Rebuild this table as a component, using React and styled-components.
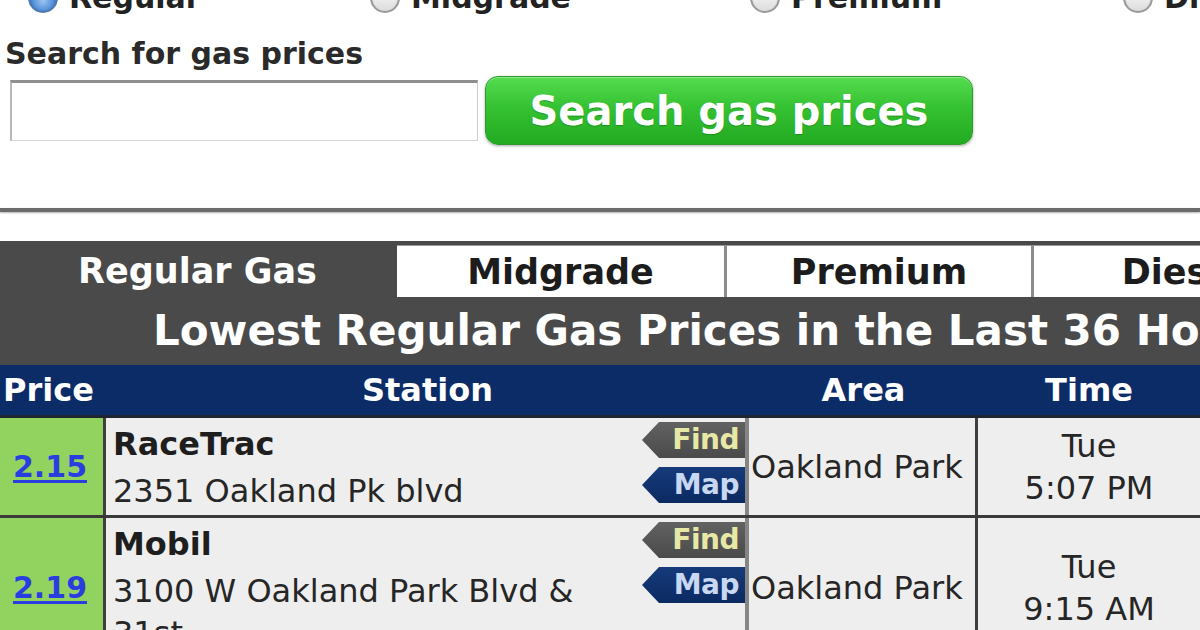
import React from "react";
import styled, { createGlobalStyle, css } from "styled-components";

const Global = createGlobalStyle`
  html, body { margin: 0; padding: 0; background: #fff; overflow: hidden; }
  body { font-family: "DejaVu Sans", "Liberation Sans", sans-serif; color: #222; }
  * { box-sizing: border-box; }
`;

const Page = styled.div`
  width: 1200px;
  height: 630px;
  overflow: hidden;
  background: #fff;
`;

const RadioRow = styled.div`
  display: grid;
  grid-template-columns: 342px 380px 373px 1fr;
  align-items: center;
  height: 40px;
  margin-top: -22px;
  padding-left: 28px;
`;

const RadioOption = styled.label`
  display: flex;
  align-items: center;
  gap: 11px;
  font-size: 30px;
  font-weight: bold;
  line-height: 30px;
  color: #222;
  white-space: nowrap;
`;

const RadioDot = styled.span`
  width: 30px;
  height: 30px;
  border-radius: 50%;
  flex: none;
  border: 2px solid #9a9a9a;
  background: linear-gradient(#ffffff, #dcdcdc);
  box-shadow: inset 0 1px 2px rgba(0, 0, 0, 0.25);
  ${(p) =>
    p.$checked &&
    css`
      border-color: #4f79ad;
      background: radial-gradient(circle at 50% 60%, #9cc6f2 0%, #4d8ad6 55%, #2d62aa 100%);
    `}
`;

const SearchLabel = styled.div`
  margin-top: 18px;
  padding-left: 5px;
  font-size: 30px;
  font-weight: bold;
  line-height: 36px;
  color: #2a2a2a;
`;

const SearchRow = styled.div`
  display: flex;
  align-items: center;
  gap: 7px;
  padding-left: 10px;
  margin-top: 4px;
`;

const SearchInput = styled.input`
  width: 468px;
  height: 61px;
  border-top: 3px solid #8f8f8f;
  border-left: 2px solid #b8b8b8;
  border-right: 1px solid #cfcfcf;
  border-bottom: 1px solid #d6d6d6;
  background: #fff;
  outline: none;
`;

const SearchButton = styled.button`
  width: 488px;
  height: 69px;
  border-radius: 13px;
  border: 1px solid #2c9a2c;
  background: linear-gradient(#55dc4f 0%, #35c232 45%, #23aa22 100%);
  box-shadow: 0 1px 3px rgba(0, 0, 0, 0.35), inset 0 1px 0 rgba(255, 255, 255, 0.35);
  color: #fff;
  font-family: "DejaVu Sans", "Liberation Sans", sans-serif;
  font-size: 40px;
  font-weight: bold;
  text-shadow: 0 1px 1px rgba(0, 80, 0, 0.35);
  padding: 0;
`;

const Rule = styled.div`
  margin-top: 63px;
  height: 4px;
  background: #6b6b6b;
  box-shadow: 0 1px 2px rgba(0, 0, 0, 0.3);
`;

const PriceBoard = styled.section`
  margin-top: 29px;
  width: 1200px;
`;

const TabBar = styled.div`
  display: flex;
  align-items: flex-end;
  height: 56px;
  background: #4a4a4a;
  white-space: nowrap;
  overflow: hidden;
`;

const Tab = styled.div`
  flex: none;
  width: ${(p) => p.$w}px;
  height: 52px;
  line-height: 52px;
  text-align: center;
  font-size: 35px;
  font-weight: bold;
  color: #1c1c1c;
  background: #fff;
  border-left: 3px solid #8c8c8c;
  border-top: 1px solid #9a9a9a;
  ${(p) =>
    p.$active &&
    css`
      background: transparent;
      color: #fff;
      border: none;
    `}
  ${(p) =>
    p.$first &&
    css`
      margin-left: 2px;
      border-left: none;
    `}
`;

const TitleBar = styled.div`
  height: 68px;
  line-height: 68px;
  padding-left: 153px;
  background: #4a4a4a;
  color: #fff;
  font-size: 42px;
  font-weight: bold;
  white-space: nowrap;
  overflow: hidden;
`;

const columns = "106px 643px 229px 1fr";

const HeaderRow = styled.div`
  display: grid;
  grid-template-columns: ${columns};
  height: 53px;
  background: #0c2c68;
  border-bottom: 3px solid #1e2430;
`;

const HeaderCell = styled.div`
  line-height: 50px;
  font-size: 32px;
  font-weight: bold;
  color: #fff;
  text-align: ${(p) => p.$align || "center"};
  padding-left: ${(p) => (p.$align === "left" ? "3px" : "0")};
`;

const Row = styled.div`
  display: grid;
  grid-template-columns: ${columns};
  border-bottom: 3px solid #3a3a3a;
`;

const PriceCell = styled.div`
  display: flex;
  align-items: center;
  justify-content: center;
  padding-right: 3px;
  background: #92d35f;
  border-right: 3px solid #3f3f3f;
`;

const PriceLink = styled.a`
  font-size: 30px;
  font-weight: bold;
  color: #2a3ee0;
  text-decoration: underline;
  text-underline-offset: 3px;
`;

const StationCell = styled.div`
  display: flex;
  background: #eeeeee;
  border-right: 4px solid #858585;
  padding-left: 7px;
`;

const StationText = styled.div`
  flex: 1;
  padding-top: 5px;
  padding-bottom: 3px;
  font-size: 32px;
  line-height: 42px;
  color: #262626;
`;

const StationName = styled.div`
  font-weight: bold;
  color: #1e1e1e;
  margin-bottom: 5px;
`;

const Tags = styled.div`
  flex: none;
  display: flex;
  flex-direction: column;
  gap: 9px;
  padding-top: 4px;
  width: 103px;
`;

const Tag = styled.div`
  height: 36px;
  line-height: 36px;
  padding-right: 6px;
  text-align: right;
  font-size: 28px;
  font-weight: bold;
  letter-spacing: -0.5px;
  clip-path: polygon(17px 0, 100% 0, 100% 100%, 17px 100%, 0 50%);
  ${(p) =>
    p.$kind === "find"
      ? css`
          background: linear-gradient(#626262, #4a4a4a);
          color: #e7e8a6;
        `
      : css`
          background: linear-gradient(#163a7a, #0b2a62);
          color: #c9d8f2;
        `}
`;

const AreaCell = styled.div`
  display: flex;
  align-items: center;
  padding-left: 2px;
  background: #eeeeee;
  border-right: 3px solid #3f3f3f;
  font-size: 32px;
  color: #262626;
  white-space: nowrap;
`;

const TimeCell = styled.div`
  display: flex;
  flex-direction: column;
  justify-content: center;
  align-items: center;
  background: #eeeeee;
  font-size: 32px;
  line-height: 42px;
  color: #262626;
`;

const rows = [
  { price: "2.15", name: "RaceTrac", addr: "2351 Oakland Pk blvd", area: "Oakland Park", day: "Tue", time: "5:07 PM" },
  { price: "2.19", name: "Mobil", addr: "3100 W Oakland Park Blvd & 31st", area: "Oakland Park", day: "Tue", time: "9:15 AM" },
];

export default function App() {
  return (
    <Page>
      <Global />
      <RadioRow>
        <RadioOption><RadioDot $checked />Regular</RadioOption>
        <RadioOption><RadioDot />Midgrade</RadioOption>
        <RadioOption><RadioDot />Premium</RadioOption>
        <RadioOption><RadioDot />Diesel</RadioOption>
      </RadioRow>
      <SearchLabel>Search for gas prices</SearchLabel>
      <SearchRow>
        <SearchInput type="text" />
        <SearchButton>Search gas prices</SearchButton>
      </SearchRow>
      <Rule />
      <PriceBoard>
        <TabBar>
          <Tab $active $w={395}>Regular Gas</Tab>
          <Tab $first $w={327}>Midgrade</Tab>
          <Tab $w={307}>Premium</Tab>
          <Tab $w={300}>Diesel</Tab>
        </TabBar>
        <TitleBar>Lowest Regular Gas Prices in the Last 36 Hours</TitleBar>
        <HeaderRow>
          <HeaderCell $align="left">Price</HeaderCell>
          <HeaderCell>Station</HeaderCell>
          <HeaderCell>Area</HeaderCell>
          <HeaderCell>Time</HeaderCell>
        </HeaderRow>
        {rows.map((r) => (
          <Row key={r.price}>
            <PriceCell>
              <PriceLink href="#">{r.price}</PriceLink>
            </PriceCell>
            <StationCell>
              <StationText>
                <StationName>{r.name}</StationName>
                {r.addr}
              </StationText>
              <Tags>
                <Tag $kind="find">Find</Tag>
                <Tag $kind="map">Map</Tag>
              </Tags>
            </StationCell>
            <AreaCell>{r.area}</AreaCell>
            <TimeCell>
              <div>{r.day}</div>
              <div>{r.time}</div>
            </TimeCell>
          </Row>
        ))}
      </PriceBoard>
    </Page>
  );
}
